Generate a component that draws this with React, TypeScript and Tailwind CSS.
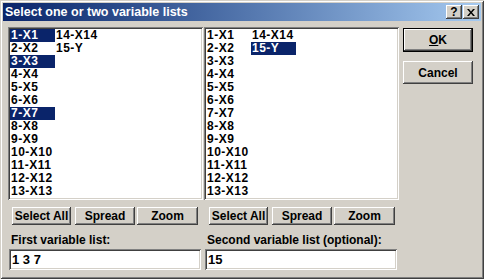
const raised =
  "bg-[#d4d0c8] shadow-[inset_-1px_-1px_#404040,inset_1px_1px_#ffffff,inset_-2px_-2px_#808080,inset_2px_2px_#d4d0c8]";
const sunken =
  "bg-white shadow-[inset_1px_1px_#808080,inset_-1px_-1px_#ffffff,inset_2px_2px_#404040,inset_-2px_-2px_#d4d0c8]";

const vars = [
  "1-X1", "2-X2", "3-X3", "4-X4", "5-X5", "6-X6", "7-X7",
  "8-X8", "9-X9", "10-X10", "11-X11", "12-X12", "13-X13", "14-X14", "15-Y",
];

function VarList({ selected }: { selected: number[] }) {
  return (
    <div className={`${sunken} h-[173px] w-[195px] p-[2px]`}>
      <div className="grid grid-flow-col grid-rows-[repeat(13,13px)] auto-cols-[45px] text-[12px] tracking-[0.5px]">
        {vars.map((v, i) => {
          const on = selected.includes(i + 1);
          return (
            <div
              key={v}
              className={`pl-[1px] leading-[13px] whitespace-nowrap ${
                on ? "bg-[#0a246a] text-white" : "text-black"
              }`}
            >
              {v}
            </div>
          );
        })}
      </div>
    </div>
  );
}

function Btn({ label, w }: { label: string; w: string }) {
  return (
    <div className={`${raised} ${w} h-[18px] flex items-center justify-center leading-none`}>
      {label}
    </div>
  );
}

function Column({
  selected,
  label,
  value,
  pad,
}: {
  selected: number[];
  label: string;
  value: string;
  pad: string;
}) {
  return (
    <div className="w-[195px] flex flex-col">
      <VarList selected={selected} />
      <div className={`flex mt-[7px] ${pad}`}>
        <Btn label="Select All" w="w-[59px]" />
        <div className="w-[4px]" />
        <Btn label="Spread" w="w-[60px]" />
        <div className="w-[2px]" />
        <Btn label="Zoom" w="w-[61px]" />
      </div>
      <div className="mt-[8px] h-[14px] leading-[14px] pl-[3px] whitespace-nowrap">{label}</div>
      <div className={`${sunken} mt-[2px] ml-[1px] w-[192px] h-[21px] flex items-center pl-[3px] text-[13px]`}>
        {value}
      </div>
    </div>
  );
}

export default function App() {
  return (
    <div className="w-[484px] h-[279px] bg-[#d4d0c8] p-[3px] flex flex-col shadow-[inset_1px_1px_#d4d0c8,inset_-1px_-1px_#404040,inset_2px_2px_#ffffff,inset_-2px_-2px_#808080] font-['Liberation_Sans',Arial,sans-serif] font-bold text-[12px] text-black">
      <div className="h-[18px] flex items-center bg-linear-to-r from-[#0a246a] to-[#a6caf0] pl-[2px] pr-[2px]">
        <span className="text-white text-[12.5px] leading-none">Select one or two variable lists</span>
        <div className="ml-auto flex">
          <div className={`${raised} w-[16px] h-[14px] flex items-center justify-center text-[12px] leading-none`}>
            ?
          </div>
          <div className={`${raised} w-[16px] h-[14px] flex items-center justify-center ml-[1px]`}>
            <svg width="8" height="7" viewBox="0 0 8 7">
              <path d="M0 0h2l2 2.5L6 0h2L5 3.5 8 7H6L4 4.5 2 7H0l3-3.5z" fill="#000" />
            </svg>
          </div>
        </div>
      </div>
      <div className="flex pt-[6px] pl-[5px]">
        <Column selected={[1, 3, 7]} label="First variable list:" value="1 3 7" pad="pl-[4px]" />
        <div className="w-[1px]" />
        <Column selected={[15]} label="Second variable list (optional):" value="15" pad="pl-[5px]" />
        <div className="ml-[4px] flex flex-col">
          <div className="mt-[1px] w-[70px] h-[24px] border border-black">
            <div className={`${raised} w-full h-full flex items-center justify-center leading-none`}>
              <span>
                <span className="underline">O</span>K
              </span>
            </div>
          </div>
          <div className={`${raised} mt-[9px] w-[70px] h-[23px] flex items-center justify-center leading-none`}>
            Cancel
          </div>
        </div>
      </div>
    </div>
  );
}
